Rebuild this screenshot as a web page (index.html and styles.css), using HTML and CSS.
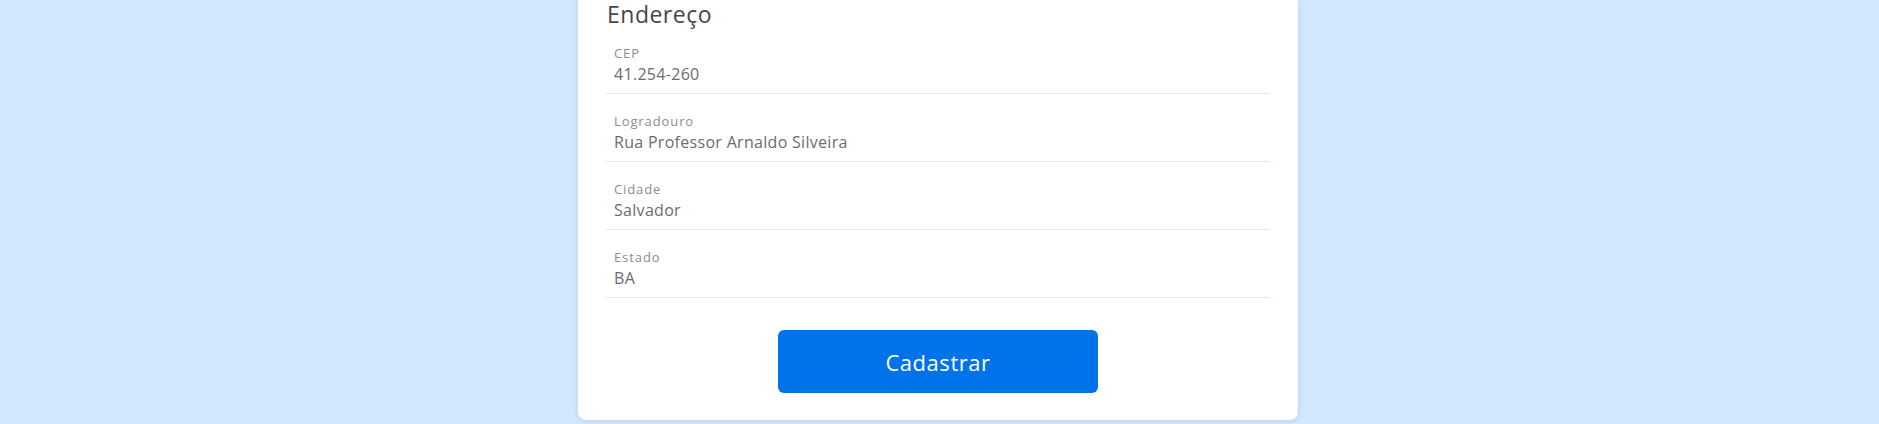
FILE: index.html
```html
<!DOCTYPE html>
<html lang="pt-BR">
<head>
<meta charset="utf-8">
<title>Cadastro - Endereço</title>
<link rel="stylesheet" href="styles.css">
</head>
<body>
<main class="page">
  <section class="card">
    <h2 class="section-title">Endereço</h2>
    <div class="field">
      <span class="field-label">CEP</span>
      <span class="field-value">41.254-260</span>
    </div>
    <div class="field">
      <span class="field-label">Logradouro</span>
      <span class="field-value">Rua Professor Arnaldo Silveira</span>
    </div>
    <div class="field">
      <span class="field-label">Cidade</span>
      <span class="field-value">Salvador</span>
    </div>
    <div class="field">
      <span class="field-label">Estado</span>
      <span class="field-value">BA</span>
    </div>
    <div class="actions">
      <button class="btn-primary" type="button">Cadastrar</button>
    </div>
  </section>
</main>
</body>
</html>
```

FILE: styles.css
```css
html, body {
  margin: 0;
  padding: 0;
  height: 100%;
  overflow: hidden;
}
body {
  background: #d3e7fe;
  font-family: "Open Sans", "Noto Sans", sans-serif;
}
.page {
  display: flex;
  justify-content: center;
  padding-right: 3px;
}
.card {
  width: 720px;
  box-sizing: border-box;
  background: #ffffff;
  border-radius: 0 0 8px 8px;
  box-shadow: 0 1px 5px rgba(40, 110, 210, 0.18);
  padding: 2px 28px 27px;
  display: flex;
  flex-direction: column;
}
.section-title {
  margin: 0;
  padding-left: 1px;
  font-size: 23px;
  line-height: 24px;
  font-weight: 400;
  letter-spacing: 0.5px;
  color: #474747;
}
.field {
  display: flex;
  flex-direction: column;
  gap: 2px;
  padding: 19px 8px 8px;
  border-bottom: 1px solid #dce9f8;
}
.field-label {
  font-size: 13px;
  line-height: 16px;
  letter-spacing: 0.9px;
  color: #8c8c8c;
}
.field-value {
  font-size: 16px;
  line-height: 22px;
  letter-spacing: 0.3px;
  color: #6c6c6c;
}
.actions {
  display: flex;
  justify-content: center;
  padding-top: 32px;
}
.btn-primary {
  width: 320px;
  height: 63px;
  border: 0;
  border-radius: 6px;
  background: #0073ea;
  color: #ffffff;
  font-family: inherit;
  font-size: 22px;
  font-weight: 400;
  letter-spacing: 0.55px;
  cursor: pointer;
}
```
